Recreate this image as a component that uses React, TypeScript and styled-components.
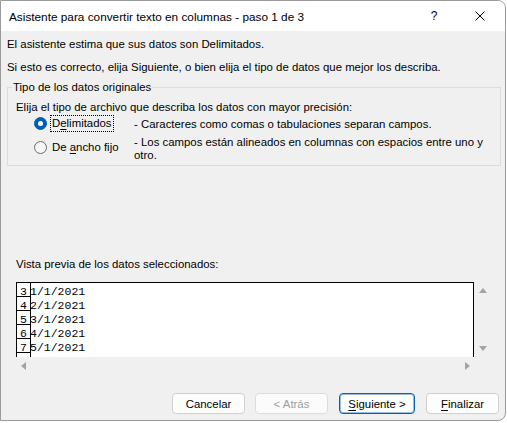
import React from "react";
import styled, { createGlobalStyle } from "styled-components";

const Global = createGlobalStyle`
  html, body { margin: 0; padding: 0; background: #ffffff; }
  body { font-family: "Liberation Sans", Arial, sans-serif; }
`;

const Window = styled.div`
  width: 506px;
  height: 421px;
  box-sizing: border-box;
  border: 1px solid #9a9a9a;
  border-radius: 0 8px 8px 0;
  background: #f0f0f0;
  display: flex;
  flex-direction: column;
  overflow: hidden;
  font-size: 11.4px;
  color: #000;
`;

const TitleBar = styled.div`
  height: 30px;
  flex: none;
  background: #ffffff;
  display: flex;
  align-items: center;
  padding-left: 8px;
`;

const Title = styled.div`
  flex: 1;
  line-height: 16px;
  font-size: 11.8px;
  padding-top: 1px;
`;

const CaptionButton = styled.div<{ $last?: boolean }>`
  width: 46px;
  height: 30px;
  display: flex;
  align-items: center;
  justify-content: center;
  margin-right: ${(p) => (p.$last ? "2px" : "0")};
  font-size: 12px;
`;

const Body = styled.div`
  flex: 1;
  display: flex;
  flex-direction: column;
  padding: 5px 4px 6px 6px;
`;

const Line = styled.div<{ $gap?: number }>`
  line-height: 16px;
  margin-top: ${(p) => p.$gap ?? 0}px;
  white-space: nowrap;
`;

const Group = styled.fieldset`
  margin: 4px 0 0 0;
  padding: 0 8px 4px 8px;
  border: 1px solid #dcdcdc;
  min-width: 0;
`;

const Legend = styled.legend`
  margin-left: -4px;
  padding: 0 1px;
  line-height: 16px;
`;

const OptionRow = styled.div<{ $gap: number }>`
  display: flex;
  align-items: flex-start;
  margin-top: ${(p) => p.$gap}px;
`;

const Radio = styled.span<{ $checked?: boolean; $offset: number }>`
  flex: none;
  box-sizing: border-box;
  width: 13px;
  height: 13px;
  border-radius: 50%;
  margin: ${(p) => p.$offset}px 3px 0 18px;
  display: flex;
  align-items: center;
  justify-content: center;
  background: ${(p) => (p.$checked ? "#005fb8" : "#f6f6f6")};
  border: 1px solid ${(p) => (p.$checked ? "#005fb8" : "#6a6a6a")};
  &::after {
    content: "";
    display: ${(p) => (p.$checked ? "block" : "none")};
    width: 5px;
    height: 5px;
    border-radius: 50%;
    background: #ffffff;
  }
`;

const OptionLabel = styled.span<{ $offset: number }>`
  flex: none;
  width: 84px;
  box-sizing: border-box;
  display: flex;
  margin-top: ${(p) => p.$offset}px;
`;

const LabelText = styled.span<{ $focused?: boolean }>`
  line-height: 15px;
  padding: 0 1px;
  border: 1px dotted ${(p) => (p.$focused ? "#000" : "transparent")};
`;

const Mnemonic = styled.u`
  text-decoration: underline;
  text-underline-offset: 1.5px;
`;

const Description = styled.span<{ $offset: number }>`
  width: 357px;
  line-height: 12.5px;
  margin-top: ${(p) => p.$offset}px;
`;

const PreviewLabel = styled.div`
  line-height: 16px;
  margin: 90px 0 0 9px;
`;

const PreviewFrame = styled.div`
  margin: 10px 0 0 9px;
  display: grid;
  grid-template-columns: 458px 18px;
  grid-template-rows: 75px 18px;
`;

const DataBox = styled.div`
  box-sizing: border-box;
  border: 1px solid #000;
  border-bottom: none;
  background: #ffffff;
  overflow: hidden;
  font-family: "Liberation Mono", "Courier New", monospace;
  font-size: 11.5px;
`;

const DataRow = styled.div`
  display: flex;
  height: 14px;
`;

const RowNumber = styled.div`
  box-sizing: border-box;
  width: 14px;
  height: 14px;
  border-right: 1px solid #000;
  border-bottom: 1px solid #000;
  text-align: center;
  line-height: 13px;
  padding-top: 2px;
  flex: none;
`;

const RowData = styled.div`
  line-height: 13px;
  padding-top: 2px;
  margin-left: -1px;
  white-space: pre;
`;

const VScroll = styled.div`
  display: flex;
  flex-direction: column;
  justify-content: space-between;
  align-items: center;
  padding: 6px 0 6px 0;
`;

const HScroll = styled.div`
  display: flex;
  justify-content: space-between;
  align-items: center;
  padding: 0 4px 0 5px;
`;

const ButtonRow = styled.div`
  margin-top: auto;
  display: flex;
  justify-content: flex-end;
  padding-right: 2px;
`;

const Button = styled.button<{ $width?: number; $gap?: number; $default?: boolean }>`
  box-sizing: border-box;
  width: ${(p) => p.$width ?? 73}px;
  height: 21px;
  margin-left: ${(p) => p.$gap ?? 0}px;
  padding: 0;
  border-radius: 4px;
  font-family: "Liberation Sans", Arial, sans-serif;
  font-size: 11.4px;
  color: #000;
  background: #fdfdfd;
  border: 1px solid ${(p) => (p.$default ? "#005fb8" : "#d0d0d0")};
  box-shadow: ${(p) => (p.$default ? "inset 0 0 0 1px rgba(0,95,184,0.4)" : "none")};
  &:disabled {
    color: #9d9d9d;
    background: #fbfbfb;
    border-color: #dcdcdc;
  }
`;

const Arrow = ({ dir }: { dir: "up" | "down" | "left" | "right" }) => {
  const vertical = dir === "up" || dir === "down";
  const w = vertical ? 8 : 5;
  const h = vertical ? 5 : 8;
  const pts =
    dir === "up"
      ? "0,5 4,0 8,5"
      : dir === "down"
      ? "0,0 8,0 4,5"
      : dir === "left"
      ? "5,0 5,8 0,4"
      : "0,0 5,4 0,8";
  return (
    <svg width={w} height={h} viewBox={`0 0 ${w} ${h}`}>
      <polygon points={pts} fill="#a3a3a3" />
    </svg>
  );
};

const rows = [
  ["3", "1/1/2021"],
  ["4", "2/1/2021"],
  ["5", "3/1/2021"],
  ["6", "4/1/2021"],
  ["7", "5/1/2021"],
  ["", ""],
];

export default function App() {
  return (
    <>
      <Global />
      <Window>
        <TitleBar>
          <Title>Asistente para convertir texto en columnas - paso 1 de 3</Title>
          <CaptionButton>?</CaptionButton>
          <CaptionButton $last>
            <svg width="10" height="10" viewBox="0 0 10 10">
              <path d="M0.5 0.5 L9.5 9.5 M9.5 0.5 L0.5 9.5" stroke="#000" strokeWidth="1" />
            </svg>
          </CaptionButton>
        </TitleBar>
        <Body>
          <Line>El asistente estima que sus datos son Delimitados.</Line>
          <Line $gap={7}>
            Si esto es correcto, elija Siguiente, o bien elija el tipo de datos que mejor los describa.
          </Line>
          <Group>
            <Legend>Tipo de los datos originales</Legend>
            <Line $gap={4}>Elija el tipo de archivo que describa los datos con mayor precisión:</Line>
            <OptionRow $gap={0}>
              <Radio $checked $offset={2} />
              <OptionLabel $offset={0}>
                <LabelText $focused>
                  D<Mnemonic>e</Mnemonic>limitados
                </LabelText>
              </OptionLabel>
              <Description $offset={2.5}>- Caracteres como comas o tabulaciones separan campos.</Description>
            </OptionRow>
            <OptionRow $gap={4}>
              <Radio $offset={5} />
              <OptionLabel $offset={2.5}>
                <LabelText>
                  De <Mnemonic>a</Mnemonic>ncho fijo
                </LabelText>
              </OptionLabel>
              <Description $offset={0}>
                - Los campos están alineados en columnas con espacios entre uno y otro.
              </Description>
            </OptionRow>
          </Group>
          <PreviewLabel>Vista previa de los datos seleccionados:</PreviewLabel>
          <PreviewFrame>
            <DataBox>
              {rows.map(([n, d], i) => (
                <DataRow key={i}>
                  <RowNumber>{n}</RowNumber>
                  <RowData>{d}</RowData>
                </DataRow>
              ))}
            </DataBox>
            <VScroll>
              <Arrow dir="up" />
              <Arrow dir="down" />
            </VScroll>
            <HScroll>
              <Arrow dir="left" />
              <Arrow dir="right" />
            </HScroll>
          </PreviewFrame>
          <ButtonRow>
            <Button>Cancelar</Button>
            <Button disabled $gap={10}>
              &lt; Atrás
            </Button>
            <Button $default $gap={11} $width={76}>
              <Mnemonic>S</Mnemonic>iguiente &gt;
            </Button>
            <Button $gap={11}>
              <Mnemonic>F</Mnemonic>inalizar
            </Button>
          </ButtonRow>
        </Body>
      </Window>
    </>
  );
}
